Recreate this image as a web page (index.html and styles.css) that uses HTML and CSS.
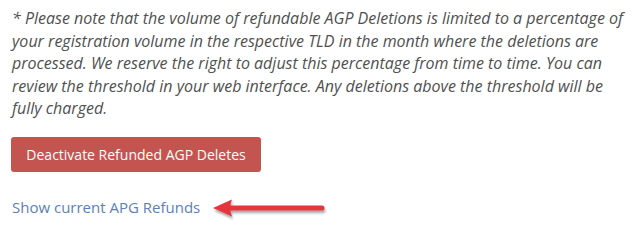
FILE: index.html
```html
<!DOCTYPE html>
<html>
<head>
<meta charset="utf-8">
<link rel="stylesheet" href="styles.css">
</head>
<body>
<div class="page">
  <p class="note">* Please note that the volume of refundable AGP Deletions is limited to a percentage of your registration volume in the respective TLD in the month where the deletions are processed. We reserve the right to adjust this percentage from time to time. You can review the threshold in your web interface. Any deletions above the threshold will be fully charged.</p>
  <button class="btn-danger">Deactivate Refunded AGP Deletes</button>
  <div class="link-row">
    <a class="link" href="#">Show current APG Refunds</a>
    <svg class="arrow" width="122" height="26" viewBox="0 0 122 26">
      <defs>
        <filter id="sh" x="-10%" y="-50%" width="120%" height="200%">
          <feDropShadow dx="1" dy="2.5" stdDeviation="1.3" flood-color="#000" flood-opacity="0.35"/>
        </filter>
      </defs>
      <g filter="url(#sh)">
        <path d="M20 10.5 L112 10.5 Q114.5 10.5 114.5 13 Q114.5 15.5 112 15.5 L20 15.5 Z" fill="#e5343e"/>
        <path d="M3 13 L22 4.5 Q18.5 13 22 21.5 Z" fill="#e5343e"/>
      </g>
    </svg>
  </div>
</div>
</body>
</html>
```

FILE: styles.css
```css
html, body {
  margin: 0;
  padding: 0;
  background: #ffffff;
}
.page {
  padding: 7px 6px 0 12px;
}
.note {
  margin: 0;
  font-family: "Open Sans", sans-serif;
  font-style: italic;
  font-size: 16px;
  line-height: 22.5px;
  color: #505050;
}
.btn-danger {
  display: block;
  margin-top: 17px;
  margin-left: -1px;
  width: 250px;
  height: 35px;
  padding: 0;
  border: none;
  border-radius: 3px;
  background: #c4544f;
  color: #ffffff;
  font-family: "Open Sans", sans-serif;
  font-size: 14px;
}
.link-row {
  display: flex;
  align-items: center;
  margin-top: 22px;
}
.link {
  font-family: "Open Sans", sans-serif;
  font-size: 15px;
  color: #5b7fb6;
  text-decoration: none;
}
.arrow {
  margin-left: 10px;
  margin-top: 1px;
}
```
